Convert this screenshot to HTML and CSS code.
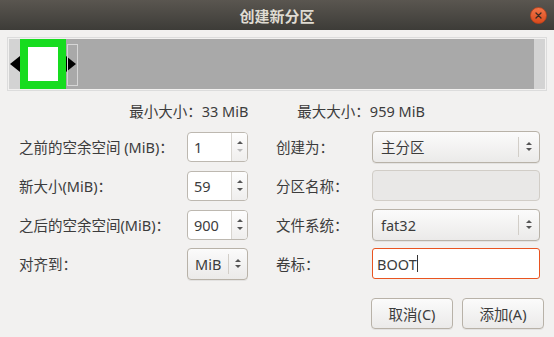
FILE: index.html
```html
<!DOCTYPE html>
<html lang="zh-CN">
<head>
  <meta charset="UTF-8">
  <title>创建新分区</title>
  <link rel="stylesheet" href="styles.css">
</head>
<body>
  <div class="dialog">
    <!-- title bar -->
    <div class="titlebar">
      <span class="title">创建新分区</span>
      <svg class="close" width="17" height="17" viewBox="0 0 17 17">
        <defs>
          <linearGradient id="cg" x1="0" y1="0" x2="0" y2="1">
            <stop offset="0" stop-color="#f37649"/>
            <stop offset="1" stop-color="#d8491b"/>
          </linearGradient>
        </defs>
        <circle cx="8.5" cy="8.5" r="8" fill="url(#cg)" stroke="#b8401a" stroke-width="0.8"/>
        <path d="M6 6 L11 11 M11 6 L6 11" stroke="#3a2a22" stroke-width="1.3" stroke-linecap="round"/>
      </svg>
    </div>

    <!-- partition bar -->
    <div class="partbar">
      <div class="seg seg-free-before"></div>
      <div class="seg seg-part"></div>
      <div class="seg seg-free-after"></div>
      <div class="seg seg-end"></div>
      <span class="arrow arrow-left"></span>
      <span class="arrow arrow-right"></span>
      <span class="handle"></span>
    </div>

    <div class="limits">
      <span>最小大小：33 MiB</span>
      <span>最大大小：959 MiB</span>
    </div>

    <div class="form">
      <label class="lbl">之前的空余空间 (MiB)：</label>
      <div class="spin">
        <span class="spin-val">1</span>
        <span class="spin-btns"><i class="up"></i><i class="down dim"></i></span>
      </div>
      <label class="lbl lbl-r">创建为：</label>
      <div class="combo"><span class="combo-val">主分区</span><span class="combo-btn"><i class="up"></i><i class="down"></i></span></div>

      <label class="lbl">新大小(MiB)：</label>
      <div class="spin">
        <span class="spin-val">59</span>
        <span class="spin-btns"><i class="up"></i><i class="down"></i></span>
      </div>
      <label class="lbl lbl-r">分区名称：</label>
      <div class="entry entry-disabled"></div>

      <label class="lbl">之后的空余空间(MiB)：</label>
      <div class="spin">
        <span class="spin-val">900</span>
        <span class="spin-btns"><i class="up"></i><i class="down"></i></span>
      </div>
      <label class="lbl lbl-r">文件系统：</label>
      <div class="combo"><span class="combo-val">fat32</span><span class="combo-btn"><i class="up"></i><i class="down"></i></span></div>

      <label class="lbl">对齐到：</label>
      <div class="combo combo-small"><span class="combo-val">MiB</span><span class="combo-btn"><i class="up"></i><i class="down"></i></span></div>
      <label class="lbl lbl-r">卷标：</label>
      <div class="entry entry-focus"><span class="entry-text">BOOT</span><span class="caret"></span></div>
    </div>

    <div class="actions">
      <button class="btn">取消(C)</button>
      <button class="btn">添加(A)</button>
    </div>
  </div>
</body>
</html>
```

FILE: styles.css
```css
body {
  margin: 0;
  width: 554px;
  height: 337px;
  overflow: hidden;
  background: #f2f1f0;
  font-family: "Noto Sans", "Noto Sans CJK SC", sans-serif;
  font-size: 14.5px;
  color: #3c3c3c;
}

.dialog {
  display: flex;
  flex-direction: column;
  height: 337px;
}

.titlebar {
  position: relative;
  height: 30px;
  display: flex;
  align-items: center;
  justify-content: center;
  background: linear-gradient(#5a5650, #3d3c38);
}

.title {
  color: #dfdbd2;
  font-weight: bold;
  font-size: 15px;
}

.close {
  position: absolute;
  right: 7px;
  top: 7px;
}

/* partition bar */
.partbar {
  position: relative;
  margin: 7px 7px 0;
  height: 50px;
  padding: 1px;
  border: 1px solid #dcdcdc;
  display: flex;
}

.seg { height: 50px; }
.seg-free-before { width: 11px; background: #d3d3d3; }
.seg-part {
  width: 30px;
  height: 34px;
  border: 8px solid #17dc1f;
  background: #fff;
}
.seg-free-after { flex: 1; background: #a9a9a9; }
.seg-end { width: 11px; background: #d3d3d3; }

.arrow {
  position: absolute;
  top: 18px;
  width: 0;
  height: 0;
  border-top: 8px solid transparent;
  border-bottom: 8px solid transparent;
}
.arrow-left { left: 2px; border-right: 10px solid #000; }
.arrow-right { left: 58px; border-left: 10px solid #000; }

.handle {
  position: absolute;
  left: 59px;
  top: 6px;
  width: 9px;
  height: 40px;
  border: 1px solid #d6d6d6;
}

.limits {
  display: flex;
  justify-content: center;
  gap: 49px;
  margin-top: 10px;
  height: 20px;
  line-height: 20px;
}

/* form grid */
.form {
  display: grid;
  grid-template-columns: 168px 61px 124px 168px;
  grid-auto-rows: 39px;
  align-items: center;
  padding-left: 19px;
  margin-top: 6px;
}

.lbl { white-space: nowrap; }
.lbl-r { padding-left: 28px; }

.spin {
  display: flex;
  height: 28px;
  border: 1px solid #bdb8b0;
  border-radius: 4px;
  overflow: hidden;
  background: #fff;
}
.spin-val {
  flex: 1;
  padding-left: 6px;
  line-height: 28px;
}
.spin-btns {
  width: 15px;
  border-left: 1px solid #d8d5d0;
  background: linear-gradient(#fdfdfd, #efeeed);
  display: flex;
  flex-direction: column;
  align-items: center;
  justify-content: center;
  gap: 5px;
}

i.up, i.down {
  display: block;
  width: 0;
  height: 0;
  border-left: 3px solid transparent;
  border-right: 3px solid transparent;
}
i.up { border-bottom: 3px solid #555; }
i.down { border-top: 3px solid #555; }
i.down.dim { border-top-color: #bbb; }

.combo {
  display: flex;
  align-items: center;
  height: 30px;
  border: 1px solid #b8b2a8;
  border-radius: 4px;
  background: linear-gradient(#fbfbfb, #ebeae9);
  box-shadow: 0 1px 0 rgba(0, 0, 0, 0.06);
}
.combo-val {
  flex: 1;
  padding-left: 8px;
}
.combo-btn {
  width: 20px;
  height: 20px;
  border-left: 1px solid #d2cec8;
  display: flex;
  flex-direction: column;
  align-items: center;
  justify-content: center;
  gap: 3px;
}
.combo-small .combo-val { padding-left: 7px; }
.combo-small .combo-btn { width: 18px; }

.entry {
  height: 29px;
  border-radius: 4px;
  display: flex;
  align-items: center;
}
.entry-disabled {
  background: #e9e8e7;
  border: 1px solid #d1cdc7;
}
.entry-focus {
  background: #fff;
  border: 1px solid #e95420;
  border-radius: 3px;
  padding-left: 4px;
}
.caret {
  width: 1px;
  height: 17px;
  background: #333;
}

.actions {
  display: flex;
  justify-content: flex-end;
  gap: 9px;
  margin: 15px 10px 0 0;
}

.btn {
  width: 82px;
  height: 31px;
  font: inherit;
  color: #3c3c3c;
  border: 1px solid #b8b2a8;
  border-radius: 4px;
  background: linear-gradient(#fbfbfb, #ebeae9);
  box-shadow: 0 1px 0 rgba(0, 0, 0, 0.06);
}
```
